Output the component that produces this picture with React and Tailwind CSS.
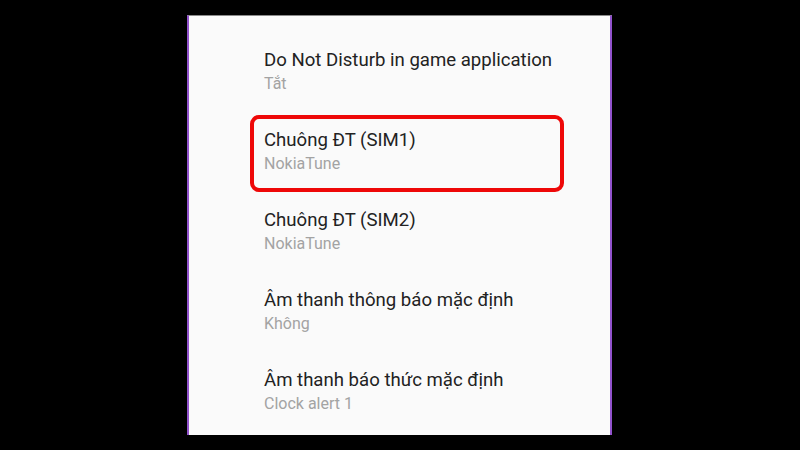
export default function App() {
  const rows = [
    { t: "Do Not Disturb in game application", s: "Tắt" },
    { t: "Chuông ĐT (SIM1)", s: "NokiaTune", hl: true },
    { t: "Chuông ĐT (SIM2)", s: "NokiaTune" },
    { t: "Âm thanh thông báo mặc định", s: "Không" },
    { t: "Âm thanh báo thức mặc định", s: "Clock alert 1" },
  ];
  return (
    <div className="w-[800px] h-[450px] bg-black overflow-hidden" style={{ fontFamily: "Roboto, 'Noto Sans', sans-serif" }}>
      <div className="ml-[187px] mt-[15px] w-[425px] h-[420px] bg-[#fafafa] border-l-2 border-r-2 border-[#9152cc] border-t border-t-[#8a8a8a] flex flex-col">
        <div className="flex-1 pt-[32px] pl-[75px]">
          {rows.map((r, i) => (
            <div key={i} className="relative h-[80px]">
              {r.hl && (
                <div className="absolute left-[-14px] top-[-13px] w-[314px] h-[77px] border-4 border-[#ee0808] rounded-[9px]" />
              )}
              <div className="text-[18.6px] leading-[24px] text-[#222222]">{r.t}</div>
              <div className="text-[16px] leading-[20px] mt-[2px] text-[#a3a3a3]">{r.s}</div>
            </div>
          ))}
        </div>
        <div className="h-[1px] bg-[#dcdcdc] mb-[5px]" />
      </div>
    </div>
  );
}
